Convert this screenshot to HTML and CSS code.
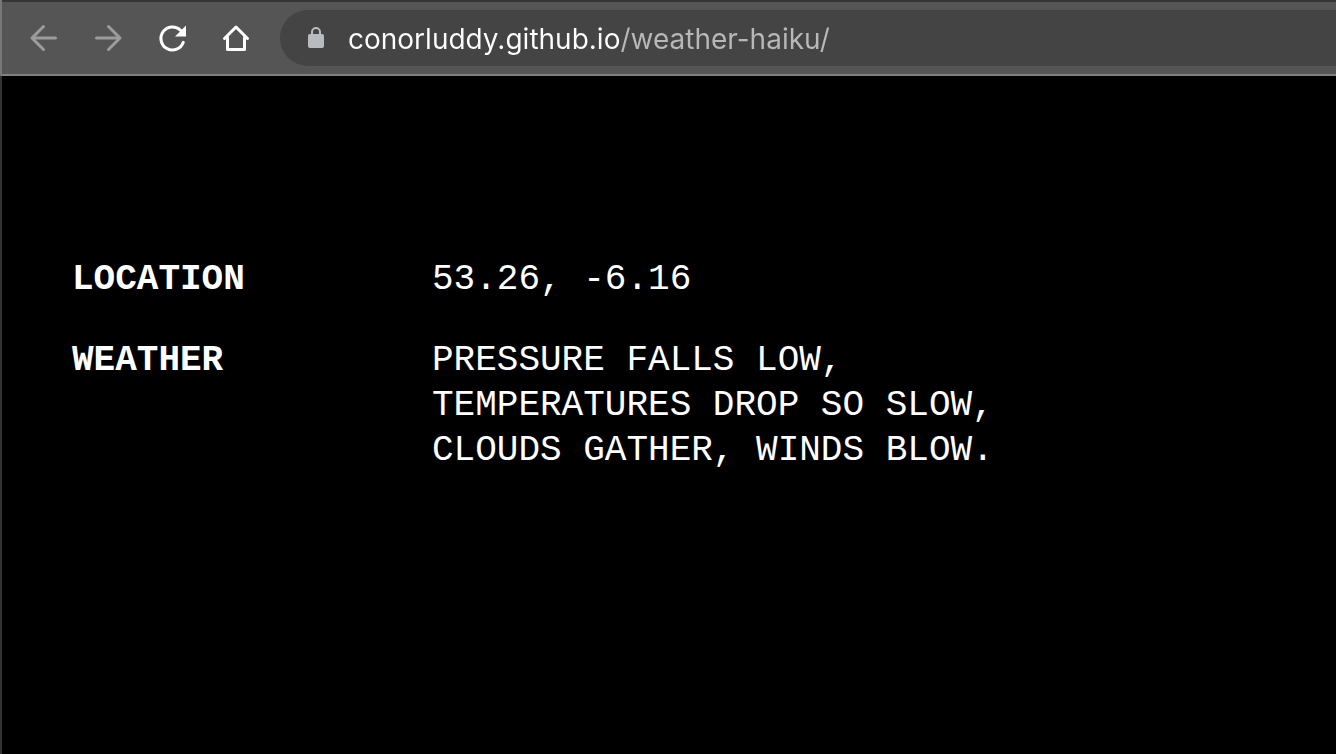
FILE: index.html
```
<!DOCTYPE html>
<html lang="en">
<head>
<meta charset="utf-8">
<meta name="viewport" content="width=device-width, initial-scale=1">
<title>Weather Haiku</title>
<link rel="stylesheet" href="styles.css">
</head>
<body>
<div class="window">
  <header class="toolbar">
    <nav class="nav" aria-label="Browser navigation">
      <button class="nav-button" type="button" aria-label="Back" disabled>
        <svg class="icon" viewBox="0 0 32 32"><path d="M15.500 4.500 4 16 15.500 27.500M4 16H27.500"/></svg>
      </button>
      <button class="nav-button" type="button" aria-label="Forward" disabled>
        <svg class="icon" viewBox="0 0 32 32"><path d="M16.500 4.500 28 16 16.500 27.500M28 16H4.500"/></svg>
      </button>
      <button class="nav-button" type="button" aria-label="Reload">
        <svg class="icon" viewBox="0 0 32 32"><path d="M24.500 8.300A11.500 11.500 0 1 0 27.300 20.300"/><path class="solid" d="M30 3.500v11H19z"/></svg>
      </button>
      <button class="nav-button" type="button" aria-label="Home">
        <svg class="icon" viewBox="0 0 32 32"><path d="M4.500 16.500 16 5l11.500 11.500M7.500 15v12.500h17V15"/></svg>
      </button>
    </nav>
    <label class="address">
      <svg class="lock" viewBox="0 0 16 22" aria-hidden="true"><path class="shackle" d="M4 8V5a4 4 0 0 1 8 0v3"/><rect y="7" width="16" height="14" rx="2"/></svg>
      <input class="url" type="text" aria-label="Address" spellcheck="false" value="conorluddy.github.io/weather-haiku/">
    </label>
  </header>
  <main class="page">
    <dl class="report">
      <dt>LOCATION</dt>
      <dd>53.26, -6.16</dd>
      <dt>WEATHER</dt>
      <dd>PRESSURE FALLS LOW,<br>TEMPERATURES DROP SO SLOW,<br>CLOUDS GATHER, WINDS BLOW.</dd>
    </dl>
  </main>
</div>
</body>
</html>
```

FILE: styles.css
```
* {
  box-sizing: border-box;
}

body {
  margin: 0;
  background: #000;
  color: #fff;
}

.window {
  display: flex;
  flex-direction: column;
  min-height: 100vh;
  border-left: 2px solid #333;
}

.toolbar {
  display: flex;
  align-items: center;
  gap: 28px;
  padding: 8px 0 8px 26px;
  background: #555;
  border-top: 2px solid #353535;
  border-bottom: 2px solid #808080;
  box-shadow: -2px 0 #777;
}

.nav {
  display: flex;
  gap: 32px;
}

.nav-button {
  display: flex;
  padding: 0;
  border: 0;
  background: none;
  color: #fff;
}

.nav-button:disabled {
  color: #9c9c9c;
}

.icon {
  width: 32px;
  height: 32px;
  fill: none;
  stroke: currentColor;
  stroke-width: 3;
  stroke-linecap: round;
  stroke-linejoin: round;
}

.solid {
  fill: currentColor;
  stroke: none;
}

.address {
  display: flex;
  flex: 1;
  align-items: center;
  gap: 24px;
  min-width: 0;
  height: 56px;
  padding-left: 28px;
  border-radius: 28px 0 0 28px;
  background: #444;
}

.lock {
  flex: none;
  width: 16px;
  height: 22px;
  fill: #b8bbc0;
}

.shackle {
  fill: none;
  stroke: #b8bbc0;
  stroke-width: 2;
}

.url {
  flex: 1;
  min-width: 0;
  padding: 2px 0 0;
  border: 0;
  outline: 0;
  background: linear-gradient(to right, #fff 273px, #b8b8b8 273px);
  background-clip: text;
  -webkit-background-clip: text;
  -webkit-text-fill-color: transparent;
  color: #fff;
  font: 28px/36px Inter, sans-serif;
}

.page {
  flex: 1;
  padding: 181px 70px 72px;
}

.report {
  display: grid;
  grid-template-columns: 324px 1fr;
  gap: 36px;
  margin: 0;
  font: 36px/45px "Liberation Mono", monospace;
}

.report dt {
  font-weight: 700;
}

.report dd {
  margin: 0;
}
```
